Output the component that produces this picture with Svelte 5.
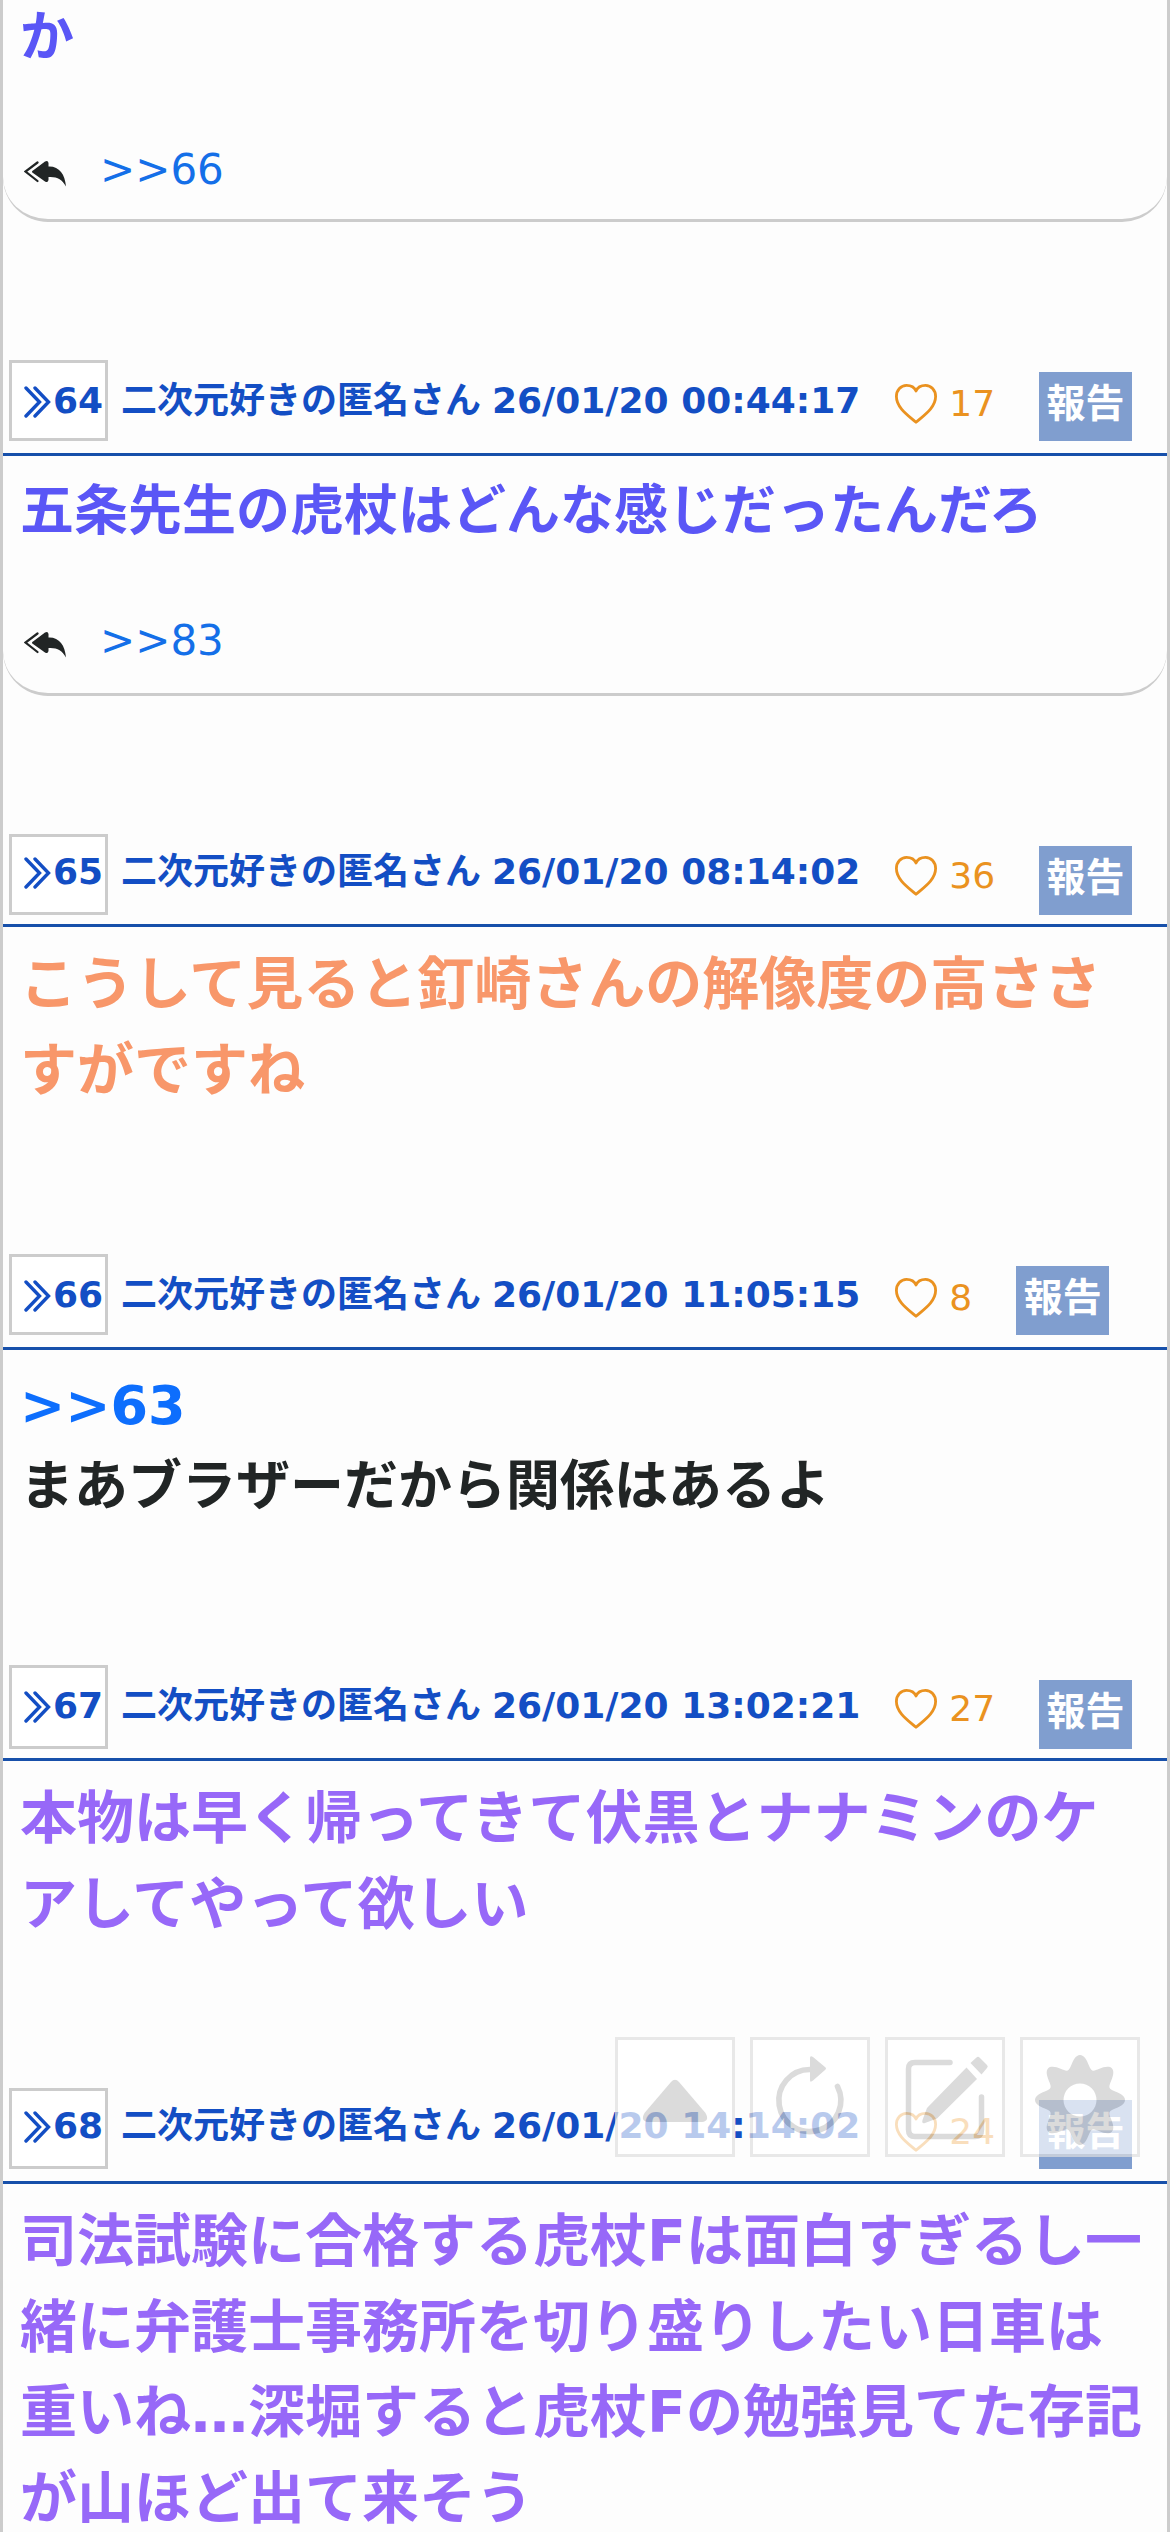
<script lang="ts">
  interface Post {
    no: number
    date: string
    likes: number
    size: number
    color: string
    anchor?: string
    lines: string[]
    replies: string[]
    headerHeight: number
    boxHeight: number
    textTop: number
    likeTop: number
    height: number
  }

  const name = '二次元好きの匿名さん'

  const posts: Post[] = [
    { no: 64, date: '26/01/20 00:44:17', likes: 17, size: 54, color: '#5a56f6', lines: ['五条先生の虎杖はどんな感じだったんだろ'], replies: ['>>83'], headerHeight: 96, boxHeight: 81, textTop: 14, likeTop: 17, height: 240 },
    { no: 65, date: '26/01/20 08:14:02', likes: 36, size: 57, color: '#f8976a', lines: ['こうして見ると釘崎さんの解像度の高ささ', 'すがですね'], replies: [], headerHeight: 93, boxHeight: 81, textTop: 11, likeTop: 15, height: 327 },
    { no: 66, date: '26/01/20 11:05:15', likes: 8, size: 54, color: '#212525', anchor: '>>63', lines: ['まあブラザーだから関係はあるよ'], replies: [], headerHeight: 96, boxHeight: 81, textTop: 14, likeTop: 17, height: 315 },
    { no: 67, date: '26/01/20 13:02:21', likes: 27, size: 57, color: '#9768f8', lines: ['本物は早く帰ってきて伏黒とナナミンのケ', 'アしてやって欲しい'], replies: [], headerHeight: 96, boxHeight: 84, textTop: 14, likeTop: 17, height: 327 },
    { no: 68, date: '26/01/20 14:14:02', likes: 24, size: 57, color: '#9768f8', lines: ['司法試験に合格する虎杖Fは面白すぎるし一', '緒に弁護士事務所を切り盛りしたい日車は', '重いね…深堀すると虎杖Fの勉強見てた存記', 'が山ほど出て来そう'], replies: [], headerHeight: 96, boxHeight: 81, textTop: 11, likeTop: 17, height: 348 },
  ]

  // eight-lobed gear outline around (60, 63)
  const gear = 'M' + Array.from({ length: 192 }, (_, i) => {
    const a = (i / 192) * Math.PI * 2
    const r = 38.5 + 6.5 * Math.cos(8 * a)
    return `${(60 + r * Math.cos(a)).toFixed(2)} ${(63 + r * Math.sin(a)).toFixed(2)}`
  }).join('L') + 'Z'
</script>

{#snippet replyRow(anchors: string[])}
  <div class="replies">
    <svg class="reply-all" viewBox="0 0 42 26" aria-hidden="true">
      <path d="M13.500 1.500 1.500 10.500 13.500 20" fill="none" stroke="currentColor" stroke-width="2.200" stroke-linecap="round" />
      <path d="M9 9.500 21 .500Q24 -1 24.500 2V5.500C35 5 41 13 42 25.500 38 18 33 15.500 24.500 16V19Q24 22 21 20.500L9 12Q7 10.700 9 9.500Z" fill="currentColor" />
    </svg>
    {#each anchors as anchor}
      <a href="#top">{anchor}</a>
    {/each}
  </div>
{/snippet}

<main>
  <section class="body card first">
    <p class="message lead">か</p>
    {@render replyRow(['>>66'])}
  </section>
  <div class="gap"></div>

  {#each posts as post}
    <header style:height="{post.headerHeight}px">
      <div class="number" style:height="{post.boxHeight}px" style:padding-top="{post.textTop - 3}px">
        <svg viewBox="0 0 27 32" aria-hidden="true">
          <path d="M2 2 15.500 16 2 30M11 2 24.500 16 11 30" fill="none" stroke="currentColor" stroke-width="3.400" stroke-linecap="round" />
        </svg>
        <span>{post.no}</span>
      </div>
      <div class="meta" style:padding-top="{post.textTop}px">
        <span>{name}</span>
        <span>{post.date}</span>
      </div>
      <div class="like" style:padding-top="{post.likeTop}px">
        <svg viewBox="0 0 42 40" aria-hidden="true">
          <path d="M21 38.300C14 32 1.400 24 1.400 12.500C1.400 6 6 1.400 11.500 1.400C16 1.400 19.500 3.500 21 7C22.500 3.500 26 1.400 30.500 1.400C36 1.400 40.600 6 40.600 12.500C40.600 24 28 32 21 38.300Z" fill="none" stroke="currentColor" stroke-width="2.800" stroke-linejoin="round" />
        </svg>
        <span>{post.likes}</span>
      </div>
      <button class="report" style:margin-top="{post.boxHeight - 69}px">報告</button>
    </header>
    <section class="body" class:card={post.replies.length > 0} style:height="{post.height}px">
      <p class="message" style:font-size="{post.size}px" style:color={post.color}>
        {#if post.anchor}<a href="#top">{post.anchor}</a><br />{/if}
        {#each post.lines as line}{line}<br />{/each}
      </p>
      {#if post.replies.length}
        {@render replyRow(post.replies)}
      {/if}
    </section>
    {#if post.replies.length}
      <div class="gap"></div>
    {/if}
  {/each}
</main>

<nav>
  <button aria-label="上へ">
    <svg viewBox="0 0 120 120">
      <path d="M56 45Q60 40.500 64 45L90.500 76Q95 84 87 85H33Q25 84 29.500 76Z" fill="currentColor" />
    </svg>
  </button>
  <button aria-label="更新">
    <svg viewBox="0 0 120 120">
      <path d="M60 32.500A31 31 0 1 0 87.500 49.500" fill="none" stroke="currentColor" stroke-width="5.600" stroke-linecap="round" />
      <path d="M60 21Q60 18 63 20L75 30Q77 31.500 75 33L63 43.500Q60 46 60 43Z" fill="currentColor" />
    </svg>
  </button>
  <button aria-label="書き込み">
    <svg viewBox="0 0 120 120">
      <path d="M65 25.500H30Q23.500 25.500 23.500 32V92.500Q23.500 99.500 30 99.500H90Q96.500 99.500 96.500 92.500V60" fill="none" stroke="currentColor" stroke-width="5.500" stroke-linecap="round" />
      <path d="M37.500 83 42 71 81.500 30.500 92 42 52 81.500 40 86Q36.500 87 37.500 83ZM85.500 26 91.500 20.500Q93 19 94.500 20.500L102 28Q103.500 29.500 102 31L96.500 37.500Z" fill="currentColor" />
    </svg>
  </button>
  <button aria-label="設定">
    <svg viewBox="0 0 120 120">
      <path d="{gear}M43.500 63a16.500 16.500 0 1 0 33 0a16.500 16.500 0 1 0 -33 0Z" fill="currentColor" fill-rule="evenodd" />
    </svg>
  </button>
</nav>

<style>
  :global(body) {
    background: #fdfdfd;
  }

  main {
    box-sizing: border-box;
    width: 1170px;
    height: 2532px;
    overflow: hidden;
    border: solid #ccc;
    border-width: 0 3px;
    font-family: 'DejaVu Sans', 'Noto Sans CJK JP', sans-serif;
  }

  a {
    color: #0d6efd;
    text-decoration: none;
  }

  .body {
    box-sizing: border-box;
    display: flex;
    flex-direction: column;
    justify-content: space-between;
    padding: 15px 0 3px 17px;
  }

  .card {
    border-bottom: 3px solid #ccc;
    border-radius: 0 0 45px 45px;
  }

  .first {
    height: 222px;
    padding-top: 0;
    padding-bottom: 0;
  }

  .message {
    margin: 0;
    font-weight: 700;
    line-height: 1.5;
    white-space: nowrap;
  }

  .lead {
    margin-top: -3px;
    font-size: 54px;
    color: #5a56f6;
  }

  .replies {
    display: flex;
    align-items: center;
    gap: 34px;
    height: 63px;
    padding: 0 4px 18px;
    font-size: 42px;
  }

  .replies a {
    color: #146fe8;
  }

  .reply-all {
    width: 42px;
    height: 26px;
    margin-top: 9px;
    color: #212525;
  }

  .gap {
    height: 138px;
  }

  header {
    box-sizing: border-box;
    display: flex;
    align-items: flex-start;
    padding-left: 6px;
    border-bottom: 3px solid #1750aa;
    font-size: 36px;
    line-height: 54px;
    color: #134ec4;
  }

  .number {
    box-sizing: border-box;
    display: flex;
    width: 99px;
    padding-left: 12px;
    border: 3px solid #ccc;
    background: #fff;
    font-weight: 700;
  }

  .number svg {
    width: 27px;
    height: 32px;
    margin: 12px 2px 0 0;
  }

  .meta {
    display: flex;
    gap: 11px;
    padding-left: 13px;
    font-weight: 700;
    white-space: nowrap;
  }

  .like {
    display: flex;
    padding-left: 35px;
    color: #ea9220;
  }

  .like svg {
    width: 42px;
    height: 40px;
    margin: 7px 12px 0 0;
  }

  .report {
    width: 93px;
    height: 69px;
    margin-left: 44px;
    padding: 0 0 12px;
    border: 0;
    background: #809ecf;
    color: #fff;
    font: 700 39px/57px 'Noto Sans CJK JP', sans-serif;
  }

  nav {
    position: fixed;
    top: 2037px;
    left: 615px;
    display: flex;
    gap: 15px;
    opacity: 0.7;
  }

  nav button {
    box-sizing: border-box;
    width: 120px;
    height: 120px;
    padding: 0;
    border: 3px solid #dedede;
    background: #fff;
    color: #ccc;
  }

  nav svg {
    display: block;
    width: 120px;
    height: 120px;
    margin: -3px;
  }
</style>
